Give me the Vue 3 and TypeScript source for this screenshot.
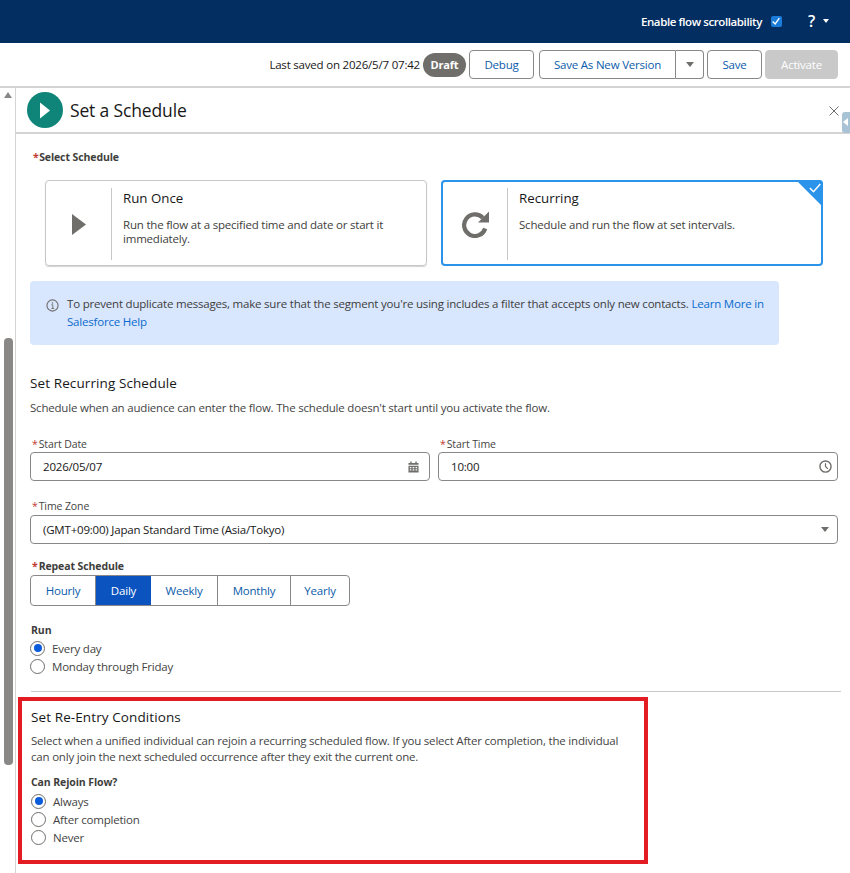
<script setup lang="ts">
const periods = ["Hourly", "Daily", "Weekly", "Monthly", "Yearly"];
const runOptions = ["Every day", "Monday through Friday"];
const rejoinOptions = ["Always", "After completion", "Never"];
</script>

<template>
  <div class="page">
    <header class="topbar">
      <span class="scroll-label">Enable flow scrollability</span>
      <span class="checkbox">
        <svg viewBox="0 0 12 12" width="10" height="10"><path d="M2 6.500 5 9.500 10 2.500" fill="none" stroke="#fff" stroke-width="1.600" /></svg>
      </span>
      <span class="help">?</span>
      <span class="help-caret"></span>
    </header>

    <div class="toolbar">
      <span class="saved">Last saved on 2026/5/7 07:42</span>
      <span class="badge">Draft</span>
      <button class="btn debug">Debug</button>
      <div class="split">
        <button class="btn split-main">Save As New Version</button>
        <button class="btn split-caret"><span class="caret"></span></button>
      </div>
      <button class="btn save">Save</button>
      <button class="btn activate">Activate</button>
    </div>

    <div class="body">
      <aside class="rail">
        <span class="rail-up"></span>
        <span class="rail-thumb"></span>
      </aside>

      <main class="panel">
        <div class="panel-head">
          <span class="flow-icon">
            <svg viewBox="0 0 36 36" width="36" height="36"><circle cx="18" cy="18" r="18" fill="#0f8579" /><path d="M13 10.500 23 18.500 13 26.500Z" fill="#fff" /></svg>
          </span>
          <h1>Set a Schedule</h1>
          <span class="close">
            <svg viewBox="0 0 10 10" width="10" height="10"><path d="M.5.500 9.500 9.500M9.500.500.5 9.500" stroke="#706e6b" stroke-width="1" /></svg>
          </span>
          <span class="collapse"><span></span></span>
        </div>

        <div class="content">
          <div class="strong-label first"><i>*</i>Select Schedule</div>

          <div class="cards">
            <div class="card">
              <div class="card-icon">
                <svg viewBox="0 0 14 21" width="14" height="21"><path d="M0 0 14 10.500 0 21Z" fill="#706e6b" /></svg>
              </div>
              <div class="card-text">
                <h3>Run Once</h3>
                <p>Run the flow at a specified time and date or start it immediately.</p>
              </div>
            </div>
            <div class="card selected">
              <div class="card-icon">
                <svg viewBox="0 0 27 27" width="27" height="27"><path d="M23.200 17.500A10.800 10.800 0 1 1 20.800 6.800" fill="none" stroke="#706e6b" stroke-width="4.200" /><path d="M27 .5V11.500H16Z" fill="#706e6b" /></svg>
              </div>
              <div class="card-text">
                <h3>Recurring</h3>
                <p>Schedule and run the flow at set intervals.</p>
              </div>
              <span class="corner">
                <svg viewBox="0 0 12 10" width="12" height="10"><path d="M.8 5 4.500 8.800 11.300 1" fill="none" stroke="#fff" stroke-width="1.400" /></svg>
              </span>
            </div>
          </div>

          <div class="notice">
            <svg class="info" viewBox="0 0 14 14" width="13" height="13"><circle cx="7" cy="7" r="6" fill="none" stroke="#706e6b" stroke-width="1.200" /><circle cx="7" cy="4.300" r=".8" fill="#706e6b" /><path d="M5.800 6.200H7.300V10M5.800 10.200H8.800" fill="none" stroke="#706e6b" stroke-width="1" /></svg>
            <p>To prevent duplicate messages, make sure that the segment you're using includes a filter that accepts only new contacts. <a>Learn More in</a> <a>Salesforce Help</a></p>
          </div>

          <h2 class="recurring-title">Set Recurring Schedule</h2>
          <p class="muted recurring-desc">Schedule when an audience can enter the flow. The schedule doesn't start until you activate the flow.</p>

          <div class="field-row">
            <div class="field">
              <div class="label"><i>*</i>Start Date</div>
              <div class="input date">
                <span>2026/05/07</span>
                <svg viewBox="0 0 12 12" width="11" height="12"><path d="M2.500 0h1.500v1.500H8V0h1.500v1.500H11.500v2H.5v-2H2.500ZM.5 4.500h11V12H.5Zm1.500 1.500v1.300h1.700V6Zm3.100 0v1.300h1.800V6Zm3.200 0v1.300H10V6ZM2 8.500v1.400h1.700V8.500Zm3.100 0v1.400h1.800V8.500Zm3.200 0v1.400H10V8.500Z" fill="#706e6b" fill-rule="evenodd" /></svg>
              </div>
            </div>
            <div class="field">
              <div class="label"><i>*</i>Start Time</div>
              <div class="input time">
                <span>10:00</span>
                <svg viewBox="0 0 14 14" width="13" height="13"><circle cx="7" cy="7" r="6" fill="none" stroke="#706e6b" stroke-width="1.500" /><path d="M7 3.500V7L9.500 9.500" fill="none" stroke="#706e6b" stroke-width="1.300" /></svg>
              </div>
            </div>
          </div>

          <div class="label zone-label"><i>*</i>Time Zone</div>
          <div class="input zone">
            <span>(GMT+09:00) Japan Standard Time (Asia/Tokyo)</span>
            <span class="caret"></span>
          </div>

          <div class="strong-label repeat-label"><i>*</i>Repeat Schedule</div>
          <div class="segments">
            <span v-for="p in periods" :key="p" :class="['segment', { on: p === 'Daily' }]">{{ p }}</span>
          </div>

          <div class="strong-label run-label">Run</div>
          <div class="radios run-radios">
            <div v-for="(o, i) in runOptions" :key="o" class="radio-row">
              <span :class="['radio', { on: i === 0 }]"></span>{{ o }}
            </div>
          </div>

          <hr class="divider" />

          <h2 class="reentry-title">Set Re-Entry Conditions</h2>
          <p class="muted reentry-desc">Select when a unified individual can rejoin a recurring scheduled flow. If you select After completion, the individual can only join the next scheduled occurrence after they exit the current one.</p>

          <div class="strong-label rejoin-label">Can Rejoin Flow?</div>
          <div class="radios rejoin-radios">
            <div v-for="(o, i) in rejoinOptions" :key="o" class="radio-row">
              <span :class="['radio', { on: i === 0 }]"></span>{{ o }}
            </div>
          </div>
        </div>
      </main>

      <div class="highlight"></div>
    </div>
  </div>
</template>

<style>
html,
body {
  margin: 0;
  overflow: hidden;
  background: #fff;
}
</style>

<style scoped>
.page {
  width: 850px;
  height: 873px;
  overflow: hidden;
  font-family: "Open Sans", "Noto Sans", sans-serif;
  font-size: 11.5px;
  color: #3e3e3c;
  letter-spacing: -0.2px;
}

.topbar {
  height: 43px;
  background: #032e61;
  display: flex;
  align-items: center;
  justify-content: flex-end;
  padding: 0 21px 1px 0;
  box-sizing: border-box;
  color: #fff;
}
.scroll-label {
  font-weight: 600;
  font-size: 11.5px;
  letter-spacing: -0.4px;
  margin-right: 9px;
}
.checkbox {
  width: 11px;
  height: 11px;
  background: #1b7bd8;
  border-radius: 2px;
  display: flex;
  align-items: center;
  justify-content: center;
  margin-right: 26px;
}
.help {
  font-size: 16px;
  font-weight: 600;
  margin-right: 8px;
}
.help-caret {
  border: 3px solid transparent;
  border-top: 4px solid #fff;
  border-bottom: 0;
}

.toolbar {
  height: 45px;
  box-sizing: border-box;
  border-bottom: 2px solid #d6d4d2;
  display: flex;
  align-items: flex-start;
  justify-content: flex-end;
  padding: 7px 12px 0 0;
  color: #181818;
}
.saved {
  font-size: 11.5px;
  line-height: 30px;
  margin-right: 3px;
}
.badge {
  width: 43px;
  height: 24px;
  box-sizing: border-box;
  margin-top: 3px;
  text-align: center;
  border-radius: 12px;
  background: #706e6b;
  color: #fff;
  font-weight: 700;
  font-size: 11px;
  line-height: 24px;
}
.btn {
  height: 29px;
  box-sizing: border-box;
  border: 1px solid #8a8886;
  border-radius: 4px;
  background: #fff;
  color: #0b5cab;
  font: inherit;
  font-size: 11.5px;
  letter-spacing: -0.2px;
  padding: 0;
  margin-left: 3px;
}
.debug {
  width: 65px;
}
.split {
  display: flex;
  margin-left: 5px;
}
.split .btn {
  margin: 0;
}
.split-main {
  width: 137px;
  border-radius: 4px 0 0 4px;
}
.split-caret {
  width: 28px;
  border-left: 0;
  border-radius: 0 4px 4px 0;
  display: flex;
  align-items: center;
  justify-content: center;
}
.caret {
  display: block;
  border-left: 4.500px solid transparent;
  border-right: 4.500px solid transparent;
  border-top: 5px solid #706e6b;
}
.save {
  width: 55px;
  margin-left: 3px;
}
.activate {
  width: 73px;
  background: #c9c9c9;
  border-color: #c9c9c9;
  color: #fff;
}

.body {
  display: flex;
  height: 785px;
  position: relative;
}
.rail {
  width: 15px;
  flex: none;
  border-right: 1px solid #d6d4d2;
  background: #fff;
  position: relative;
}
.rail-up {
  position: absolute;
  left: 4px;
  top: 4px;
  border-left: 4.500px solid transparent;
  border-right: 4.500px solid transparent;
  border-bottom: 6px solid #8a8886;
}
.rail-thumb {
  position: absolute;
  left: 4px;
  top: 250px;
  width: 9px;
  height: 427px;
  border-radius: 4px;
  background: #8a8886;
}

.panel {
  flex: 1;
  min-width: 0;
}
.panel-head {
  height: 46px;
  box-sizing: border-box;
  border-bottom: 2px solid #d6d4d2;
  display: flex;
  align-items: center;
  padding-left: 11px;
  position: relative;
}
.flow-icon {
  display: flex;
  margin-right: 7px;
}
h1 {
  margin: 0;
  font-size: 17.500px;
  font-weight: 400;
  letter-spacing: -0.15px;
  color: #181818;
}
.close {
  position: absolute;
  right: 11px;
  top: 18px;
  display: flex;
}
.collapse {
  position: absolute;
  right: -2px;
  top: 24px;
  width: 10px;
  height: 21px;
  background: #a9c3d6;
  border-radius: 3px;
}
.collapse span {
  display: block;
  margin: 6px 0 0 1px;
  border-top: 4px solid transparent;
  border-bottom: 4px solid transparent;
  border-right: 5px solid #fff;
  width: 0;
}

.content {
  padding-left: 14px;
}
i {
  color: #c23934;
  font-style: normal;
  margin: 0 1px 0 2px;
}
.strong-label {
  font-weight: 700;
  font-size: 10.500px;
  letter-spacing: -0.1px;
  color: #3e3e3c;
  line-height: 14px;
}
.first {
  padding-top: 16px;
  padding-left: 1px;
}
.first i {
  margin-right: 0.5px;
}
.cards {
  display: flex;
  gap: 14px;
  margin: 16px 0 0 15px;
}
.card {
  width: 382px;
  height: 86px;
  box-sizing: border-box;
  border: 1px solid #c9c7c5;
  border-radius: 4px;
  box-shadow: 0 1px 1px #d6d4d2;
  display: flex;
  padding: 7px 0;
  position: relative;
}
.card.selected {
  border: 2px solid #2c93eb;
  box-shadow: none;
  padding: 6px 0;
}
.card-icon {
  width: 66px;
  height: 72px;
  box-sizing: border-box;
  border-right: 1px solid #c9c7c5;
  display: flex;
  align-items: center;
  justify-content: center;
}
.selected .card-icon {
  width: 65px;
}
.card-text {
  padding-left: 11px;
  width: 286px;
}
h3 {
  margin: 2px 0 11px;
  font-size: 13.300px;
  font-weight: 400;
  line-height: 17px;
  color: #181818;
  letter-spacing: 0;
}
.card-text p {
  margin: 0;
  line-height: 14px;
  color: #3e3e3c;
}
.corner {
  position: absolute;
  top: -2px;
  right: -2px;
  width: 27px;
  height: 27px;
  background: #2c93eb;
  clip-path: polygon(0 0, 100% 0, 100% 100%);
  border-top-right-radius: 4px;
}
.corner svg {
  position: absolute;
  right: 2px;
  top: 3px;
}

.notice {
  width: 749px;
  height: 64px;
  box-sizing: border-box;
  margin-top: 15px;
  background: #d8e6fe;
  border-radius: 4px;
  padding: 14px 0 0 16px;
  display: flex;
  gap: 8px;
}
.info {
  flex: none;
  margin-top: 4px;
}
.notice p {
  margin: 0;
  line-height: 18px;
  width: 700px;
}
a {
  color: #0b6bcb;
  white-space: nowrap;
}

h2 {
  margin: 0;
  font-size: 13.500px;
  font-weight: 400;
  color: #181818;
  letter-spacing: 0.1px;
  line-height: 17px;
}
.recurring-title {
  margin-top: 30px;
}
.muted {
  margin: 0;
  color: #444;
  font-size: 11.5px;
  line-height: 16px;
}
.recurring-desc {
  margin-top: 8px;
}

.field-row {
  display: flex;
  gap: 8px;
  margin-top: 21px;
  width: 808px;
}
.field {
  flex: 1;
}
.label {
  font-size: 10.500px;
  letter-spacing: -0.1px;
  line-height: 14px;
  color: #444;
  margin-bottom: 1px;
}
.input {
  height: 29px;
  box-sizing: border-box;
  border: 1px solid #8a8886;
  border-radius: 4px;
  display: flex;
  align-items: center;
  justify-content: space-between;
  padding: 0 8px 0 12px;
  color: #181818;
}
.date {
  padding-right: 10px;
}
.time {
  padding-right: 5px;
}
.zone-label {
  margin-top: 18px;
  margin-bottom: 2px;
}
.zone {
  width: 808px;
}
.repeat-label {
  margin-top: 15px;
}
.segments {
  display: flex;
  width: 320px;
  height: 31px;
  box-sizing: border-box;
  margin-top: 2px;
  border: 1px solid #8a8886;
  border-radius: 4px;
  overflow: hidden;
}
.segment {
  display: flex;
  align-items: center;
  justify-content: center;
  color: #0b5cab;
  border-right: 1px solid #8a8886;
  box-sizing: border-box;
}
.segment:nth-child(1) { width: 65px; }
.segment:nth-child(2) { width: 55px; }
.segment:nth-child(3) { width: 67px; }
.segment:nth-child(4) { width: 73px; }
.segment:nth-child(5) { width: 58px; border-right: 0; }
.segment.on {
  background: #0b53bf;
  color: #fff;
  border-right: 0;
}
.run-label {
  margin-top: 17px;
  padding-left: 1px;
}
.radios {
  display: flex;
  flex-direction: column;
}
.radio-row {
  height: 18px;
  display: flex;
  align-items: center;
  gap: 7px;
  color: #444;
}
.radio {
  width: 15px;
  height: 15px;
  flex: none;
  box-sizing: border-box;
  border: 1px solid #706e6b;
  border-radius: 50%;
  background: #fff;
  position: relative;
}
.radio.on::after {
  content: "";
  position: absolute;
  inset: 2.500px;
  border-radius: 50%;
  background: #0b5cdb;
}
.run-radios {
  margin-top: 2px;
}
.divider {
  width: 810px;
  margin: 16px 0 0 1px;
  border: 0;
  border-top: 1px solid #c9c7c5;
}
.reentry-title {
  margin-top: 17px;
  padding-left: 1px;
}
.reentry-desc {
  margin-top: 7px;
  width: 600px;
  padding-left: 1px;
}
.rejoin-label {
  margin-top: 10px;
  padding-left: 1px;
}
.rejoin-radios {
  margin-top: 3px;
  padding-left: 1px;
}

.highlight {
  position: absolute;
  left: 18px;
  top: 609px;
  width: 630px;
  height: 167px;
  box-sizing: border-box;
  border: 4px solid #e31b23;
  pointer-events: none;
}
</style>
